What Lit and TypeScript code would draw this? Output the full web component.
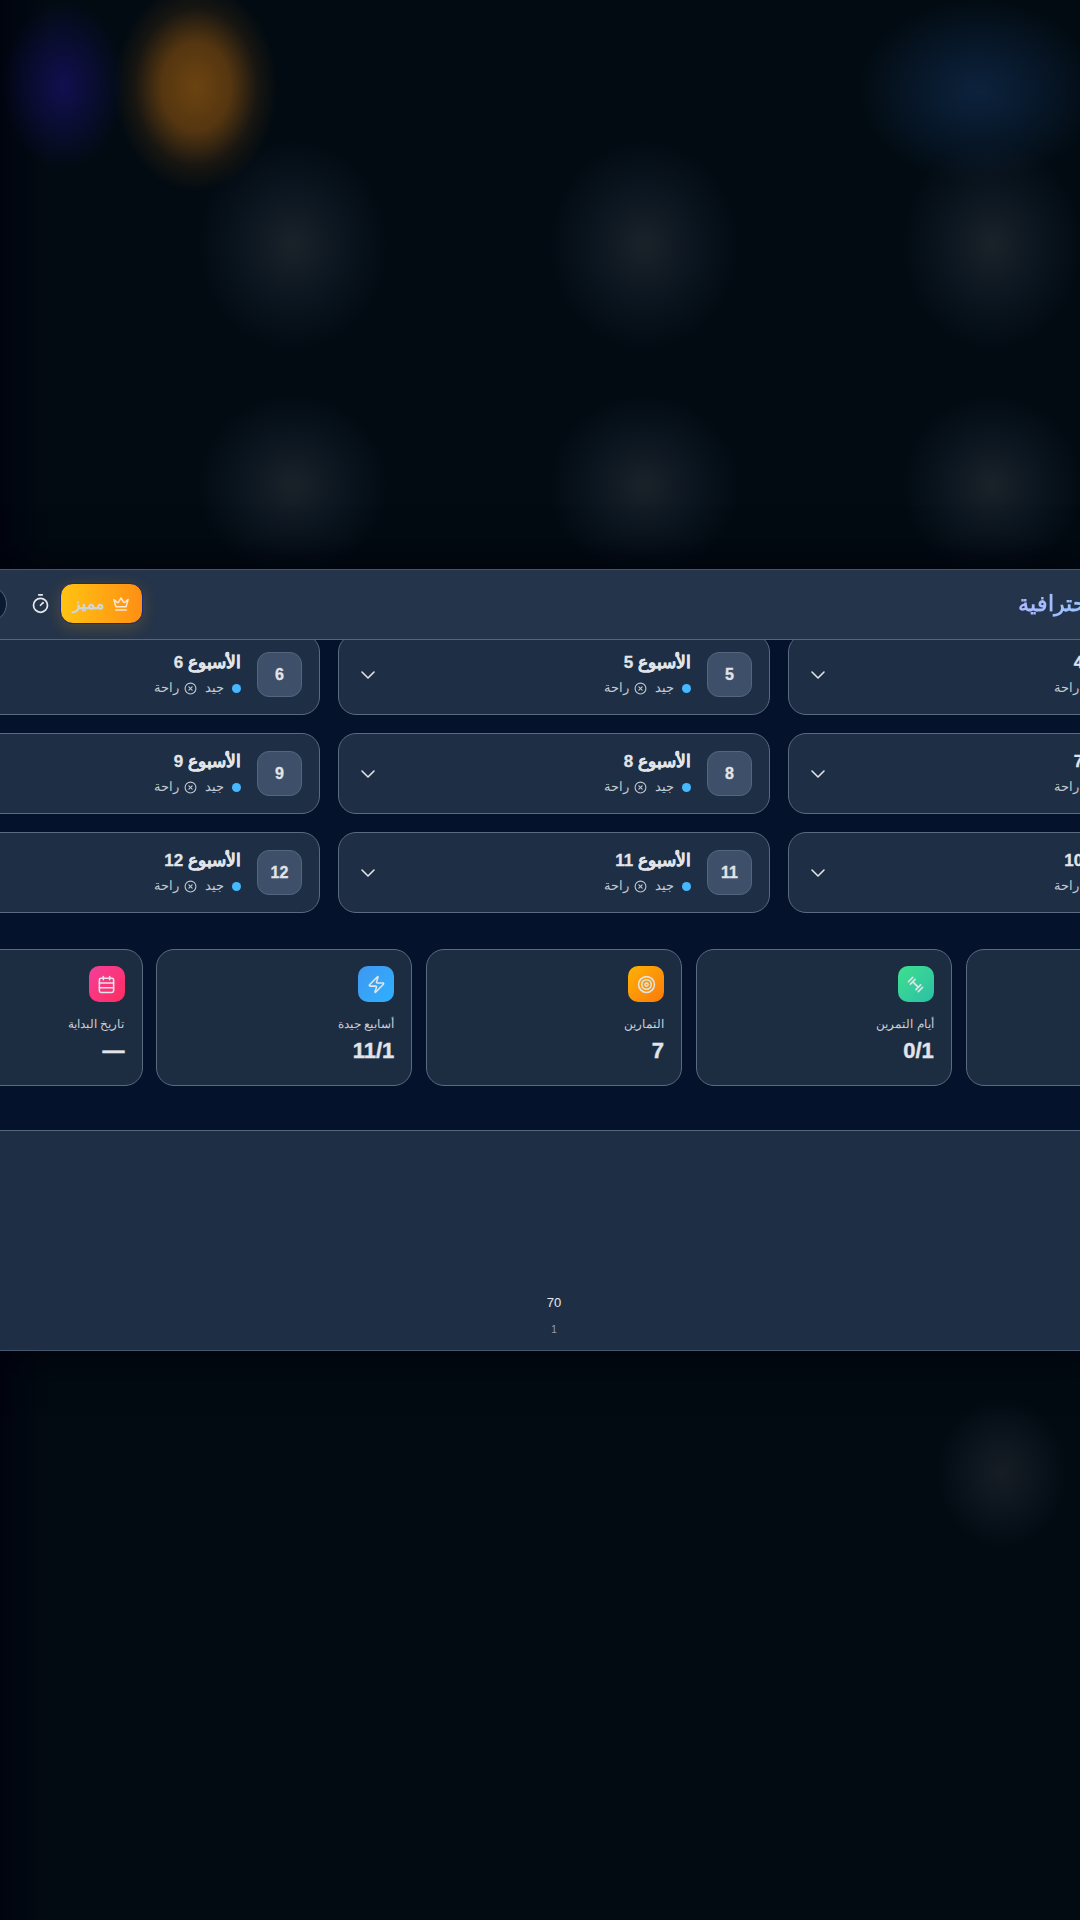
import { LitElement, html, css, svg } from "lit";
import { customElement } from "lit/decorators.js";

const icon = (paths: unknown, cls = "ic") => html`<svg class=${cls} viewBox="0 0 24 24" fill="none" stroke="currentColor" stroke-linecap="round" stroke-linejoin="round">${paths}</svg>`;

const chevron = svg`<path d="m6 9 6 6 6-6"/>`;
const circleX = svg`<circle cx="12" cy="12" r="10"/><path d="m15 9-6 6"/><path d="m9 9 6 6"/>`;
const timer = svg`<line x1="10" x2="14" y1="2" y2="2"/><line x1="12" x2="15" y1="14" y2="11"/><circle cx="12" cy="14" r="8"/>`;
const crown = svg`<path d="M12 4l3.4 5.6a1 1 0 0 0 1.5.3L21.5 6l-2.6 9.5H5.1L2.5 6l4.6 3.9a1 1 0 0 0 1.5-.3z"/><path d="M5 20h14"/>`;
const dumbbell = svg`<path d="M9 9l6 6"/><path d="M5.5 11.5l6-6"/><path d="M3 8.5L8.5 3"/><path d="M12.5 18.5l6-6"/><path d="M15.5 21L21 15.5"/>`;
const target = svg`<circle cx="12" cy="12" r="10"/><circle cx="12" cy="12" r="6"/><circle cx="12" cy="12" r="2"/>`;
const zap = svg`<path d="M4 14a1 1 0 0 1-.78-1.63l9.9-10.2a.5.5 0 0 1 .86.46l-1.92 6.02A1 1 0 0 0 13 10h7a1 1 0 0 1 .78 1.63l-9.9 10.2a.5.5 0 0 1-.86-.46l1.92-6.02A1 1 0 0 0 11 14z"/>`;
const calendar = svg`<path d="M8 2v4"/><path d="M16 2v4"/><rect width="18" height="18" x="3" y="4" rx="2"/><path d="M3 10h18"/><path d="M3 16h18"/>`;

const weeks = [4, 5, 6, 7, 8, 9, 10, 11, 12];
const stats = [
  { label: "المدة", value: "12", tone: "violet", icon: calendar },
  { label: "أيام التمرين", value: "0/1", tone: "green", icon: dumbbell },
  { label: "التمارين", value: "7", tone: "orange", icon: target },
  { label: "أسابيع جيدة", value: "11/1", tone: "blue", icon: zap },
  { label: "تاريخ البداية", value: "—", tone: "pink", icon: calendar },
];

@customElement("app-root")
export class AppRoot extends LitElement {
  static styles = css`
    :host {
      display: block;
      width: 1080px;
      height: 1920px;
      overflow: hidden;
      font-family: "Liberation Sans", Inter, sans-serif;
      background-color: #020b12;
      background-image:
        radial-gradient(ellipse 62px 85px at 63px 85px, #110f50 0%, rgba(17, 15, 80, 0.5) 50%, rgba(17, 15, 80, 0) 100%),
        radial-gradient(ellipse 82px 105px at 196px 87px, #6c4311 0%, #553610 42%, rgba(80, 50, 16, 0.28) 75%, rgba(80, 50, 16, 0) 100%),
        radial-gradient(ellipse 120px 92px at 978px 91px, #0c223d 0%, rgba(12, 34, 61, 0.55) 50%, rgba(12, 34, 61, 0) 100%),
        radial-gradient(ellipse 95px 105px at 293px 245px, #1a2229 0%, rgba(18, 28, 40, 0.65) 50%, rgba(18, 28, 40, 0) 100%),
        radial-gradient(ellipse 95px 105px at 644px 245px, #1a2229 0%, rgba(18, 28, 40, 0.65) 50%, rgba(18, 28, 40, 0) 100%),
        radial-gradient(ellipse 90px 105px at 992px 245px, #1a2229 0%, rgba(18, 28, 40, 0.65) 50%, rgba(18, 28, 40, 0) 100%),
        radial-gradient(ellipse 95px 90px at 293px 485px, #1a2229 0%, rgba(18, 28, 40, 0.65) 50%, rgba(18, 28, 40, 0) 100%),
        radial-gradient(ellipse 95px 90px at 644px 485px, #1a2229 0%, rgba(18, 28, 40, 0.65) 50%, rgba(18, 28, 40, 0) 100%),
        radial-gradient(ellipse 90px 90px at 992px 485px, #1a2229 0%, rgba(18, 28, 40, 0.65) 50%, rgba(18, 28, 40, 0) 100%),
        radial-gradient(ellipse 65px 75px at 1002px 1473px, #161d25 0%, rgba(20, 28, 38, 0.55) 50%, rgba(20, 28, 38, 0) 100%),
        linear-gradient(90deg, #00040f 0, rgba(0, 4, 15, 0) 50px);
      padding-top: 569px;
      box-sizing: border-box;
    }
    .main {
      background: #04122c;
      display: flex;
      flex-direction: column;
      align-items: center;
      box-shadow: 0 0 36px 10px rgba(0, 2, 12, 0.8);
    }
    .topbar {
      position: relative;
      z-index: 2;
      align-self: stretch;
      height: 71px;
      box-sizing: border-box;
      padding: 0 0 2px 28px;
      background: #24344a;
      border-top: 1px solid #46566d;
      border-bottom: 1px solid #55657c;
      display: flex;
      justify-content: center;
    }
    .topbar-inner {
      flex: none;
      width: 1334px;
      box-sizing: border-box;
      padding: 0 18px;
      display: flex;
      align-items: center;
      justify-content: space-between;
    }
    .title {
      font-size: 22px;
      font-weight: 700;
      color: transparent;
      background: linear-gradient(90deg, #aab9ff, #7dd3fc);
      -webkit-background-clip: text;
      background-clip: text;
    }
    .actions { display: flex; align-items: center; }
    .premium {
      width: 83px;
      height: 41px;
      box-sizing: border-box;
      border-radius: 13px;
      background: linear-gradient(90deg, #ffc312 0%, #ff8f14 100%);
      border: 1px solid #1c2a78;
      box-shadow: 0 4px 16px rgba(250, 180, 30, 0.2);
      display: flex;
      align-items: center;
      justify-content: center;
      gap: 7px;
      color: #cfd5dc;
      font-size: 16px;
      font-weight: 700;
    }
    .crown { width: 18px; height: 18px; stroke-width: 2; color: #fde8d8; flex: none; }
    .timer { width: 21px; height: 21px; stroke-width: 2; color: #e5e7eb; margin: 0 9px 0 10px; flex: none; }
    .pill {
      width: 102px;
      height: 36px;
      box-sizing: border-box;
      margin-right: 13px;
      border-radius: 18px;
      background: #0b1a33;
      border: 1px solid #56657c;
      flex: none;
    }
    .weeks {
      flex: none;
      width: 1332px;
      margin: -6px 0 0 28px;
      display: grid;
      grid-template-columns: repeat(3, 432px);
      gap: 18px;
    }
    .week {
      height: 81px;
      box-sizing: border-box;
      padding: 0 17px;
      border-radius: 18px;
      background: #1e2f45;
      border: 1px solid #5a6a80;
      display: flex;
      align-items: center;
      gap: 16px;
    }
    .num {
      flex: none;
      width: 45px;
      height: 45px;
      box-sizing: border-box;
      border-radius: 12px;
      background: #3d4f69;
      border: 1px solid #55657e;
      display: flex;
      align-items: center;
      justify-content: center;
      color: #e2e4e8;
      font-size: 16px;
      font-weight: 700;
      -webkit-text-stroke: 0.3px currentColor;
    }
    .info { flex: 1; min-width: 0; display: flex; flex-direction: column; gap: 5px; }
    .wtitle { font-size: 17px; font-weight: 700; line-height: 22px; color: #e2e4e8; -webkit-text-stroke: 0.3px currentColor; }
    .meta { display: flex; align-items: center; font-size: 13px; line-height: 18px; color: #c3c9d2; }
    .dot { width: 9px; height: 9px; border-radius: 50%; background: #45b8ff; margin-left: 8px; flex: none; }
    .x { width: 13px; height: 13px; stroke-width: 2; margin: 0 8px 0 5px; flex: none; }
    .chev { width: 24px; height: 24px; stroke-width: 1.6; color: #dfe3e8; flex: none; }
    .stats {
      flex: none;
      width: 1335px;
      margin: 36px 0 0 28px;
      display: grid;
      grid-template-columns: repeat(5, 256px);
      gap: 13.75px;
    }
    .stat {
      height: 137px;
      box-sizing: border-box;
      padding: 16px 17px 0;
      border-radius: 18px;
      background: #1c2d42;
      border: 1px solid #5a6a80;
    }
    .tile {
      width: 36px;
      height: 36px;
      border-radius: 10px;
      display: flex;
      align-items: center;
      justify-content: center;
      color: #dfe5ea;
    }
    .tile .ic { width: 19px; height: 19px; stroke-width: 2; }
    .violet { background: linear-gradient(135deg, #8b5cf6, #6366f1); }
    .green { background: linear-gradient(135deg, #3ee08f, #2cbfa5); }
    .orange { background: linear-gradient(135deg, #fdb204, #fb7a0c); }
    .blue { background: linear-gradient(135deg, #3f97f0, #2fb0ff); }
    .pink { background: linear-gradient(135deg, #f43f9a, #ff2d5f); }
    .slabel { margin-top: 13px; font-size: 12px; line-height: 18px; color: #c9ced6; }
    .svalue { margin-top: 5px; font-size: 22px; line-height: 26px; font-weight: 700; color: #e2e4e8; -webkit-text-stroke: 0.4px currentColor; }
    .chart {
      align-self: stretch;
      margin-top: 44px;
      height: 221px;
      box-sizing: border-box;
      padding: 0 0 13px 28px;
      background: #1e2f45;
      border-top: 1px solid #56667c;
      border-bottom: 1px solid #46566d;
      display: flex;
      flex-direction: column;
      align-items: center;
      justify-content: flex-end;
    }
    .cv { font-size: 13px; line-height: 18px; color: #e5e7eb; }
    .cl { margin-top: 11px; font-size: 10px; line-height: 14px; color: #8ea0b8; }
  `;

  render() {
    return html`
      <div class="main" dir="rtl">
        <header class="topbar">
          <div class="topbar-inner">
            <div class="title">خطة تمرين احترافية</div>
            <div class="actions">
              <div class="premium">${icon(crown, "crown")}<span>مميز</span></div>
              ${icon(timer, "timer")}
              <div class="pill"></div>
            </div>
          </div>
        </header>
        <section class="weeks">
          ${weeks.map(
            (w) => html`<article class="week">
              <div class="num">${w}</div>
              <div class="info">
                <div class="wtitle">الأسبوع ${w}</div>
                <div class="meta"><span class="dot"></span><span>جيد</span>${icon(circleX, "x")}<span>راحة</span></div>
              </div>
              ${icon(chevron, "chev")}
            </article>`
          )}
        </section>
        <section class="stats">
          ${stats.map(
            (s) => html`<article class="stat">
              <div class="tile ${s.tone}">${icon(s.icon)}</div>
              <div class="slabel">${s.label}</div>
              <div class="svalue"><bdi>${s.value}</bdi></div>
            </article>`
          )}
        </section>
        <section class="chart">
          <div class="cv">70</div>
          <div class="cl">1</div>
        </section>
      </div>
    `;
  }
}
